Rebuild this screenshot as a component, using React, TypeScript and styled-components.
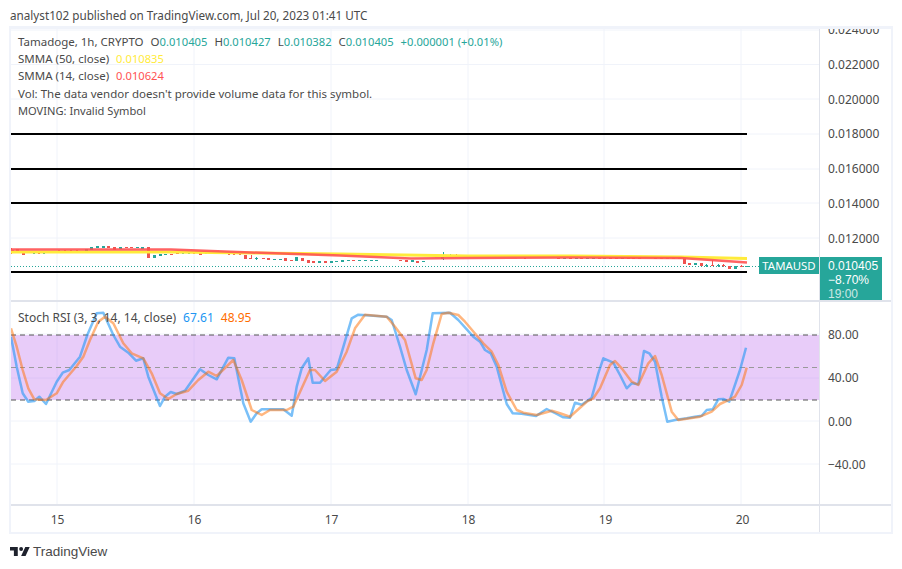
import styled, { createGlobalStyle } from 'styled-components'

const GREEN = '#26a69a'
const RED = '#ef5350'

type Candle = [number, number, number, number, string]

// x, top, width, height, colour
const candles: Candle[] = [
  [11, 248, 1, 6, RED], [11, 250, 3, 3, RED], [16, 249, 3, 3, RED], [22, 253, 3, 2, RED],
  [29, 252, 2, 1, GREEN], [33, 253, 2, 1, GREEN], [38, 253, 2, 1, RED], [43, 253, 2, 1, GREEN],
  [58, 250, 2, 1, RED], [64, 250, 2, 1, RED], [70, 250, 2, 1, RED], [76, 250, 2, 1, RED],
  [85, 249, 3, 2, GREEN], [90, 247, 3, 3, GREEN], [96, 246, 3, 2, GREEN], [102, 246, 3, 2, GREEN],
  [107, 246, 3, 2, RED], [113, 247, 3, 3, RED], [119, 247, 3, 2, GREEN], [125, 247, 3, 1, RED],
  [130, 247, 3, 1, RED], [136, 247, 3, 1, GREEN], [141, 247, 3, 2, GREEN], [147, 247, 3, 11, RED],
  [153, 255, 3, 3, GREEN], [159, 254, 3, 2, GREEN], [164, 254, 3, 1, GREEN], [170, 254, 3, 1, RED],
  [176, 253, 3, 1, RED], [182, 253, 2, 1, GREEN], [188, 253, 2, 1, GREEN], [193, 253, 2, 1, RED],
  [199, 253, 3, 2, RED], [205, 253, 2, 1, GREEN], [211, 253, 2, 1, GREEN], [216, 253, 2, 1, GREEN],
  [222, 253, 2, 1, RED], [228, 254, 2, 1, RED], [233, 254, 2, 1, RED], [239, 254, 2, 1, RED],
  [244, 255, 3, 4, RED], [251, 255, 1, 4, RED], [249, 258, 3, 1, RED], [255, 258, 3, 1, GREEN],
  [256, 257, 1, 3, GREEN], [262, 258, 3, 1, RED], [267, 258, 3, 2, RED], [273, 259, 3, 1, GREEN],
  [279, 259, 3, 1, GREEN], [284, 258, 3, 3, RED], [290, 260, 3, 1, RED], [295, 257, 3, 4, GREEN],
  [301, 258, 3, 3, RED], [307, 260, 3, 3, RED], [312, 261, 3, 2, RED], [318, 261, 3, 2, GREEN],
  [324, 261, 3, 2, RED], [330, 261, 3, 2, GREEN], [335, 261, 3, 1, GREEN], [341, 260, 3, 2, GREEN],
  [347, 260, 3, 1, GREEN], [352, 260, 3, 1, RED], [358, 260, 3, 1, GREEN], [364, 260, 3, 1, GREEN],
  [370, 260, 3, 1, GREEN], [375, 260, 3, 1, GREEN], [399, 260, 3, 1, RED], [405, 260, 3, 2, RED],
  [411, 260, 3, 2, GREEN], [416, 261, 3, 2, RED], [422, 261, 3, 1, GREEN], [443, 252, 1, 8, GREEN],
  [441, 257, 3, 2, GREEN], [450, 254, 1, 3, GREEN], [456, 254, 1, 3, RED], [524, 258, 2, 1, RED],
  [557, 258, 3, 1, RED], [563, 258, 3, 1, GREEN], [569, 258, 3, 1, RED], [575, 258, 3, 1, GREEN],
  [580, 258, 3, 1, RED], [586, 258, 3, 1, GREEN], [592, 258, 3, 1, GREEN], [598, 258, 3, 1, RED],
  [603, 258, 3, 1, GREEN], [609, 258, 3, 1, RED], [615, 258, 3, 1, RED], [621, 258, 3, 1, GREEN],
  [627, 258, 3, 1, RED], [632, 258, 3, 1, RED], [638, 258, 3, 1, RED], [654, 258, 3, 1, RED],
  [660, 258, 3, 1, RED], [666, 258, 3, 1, RED], [672, 258, 3, 1, RED], [678, 258, 3, 1, RED],
  [683, 258, 3, 6, RED], [688, 263, 3, 2, RED], [694, 263, 3, 2, GREEN], [700, 263, 3, 3, RED],
  [706, 264, 1, 3, GREEN], [705, 265, 3, 1, GREEN], [712, 260, 1, 6, RED], [711, 265, 3, 1, RED],
  [718, 264, 1, 3, GREEN], [717, 265, 3, 1, GREEN], [723, 264, 1, 3, RED], [722, 265, 3, 1, RED],
  [728, 266, 3, 3, RED], [734, 266, 3, 3, GREEN], [741, 265, 1, 2, RED], [740, 266, 3, 1, RED],
  [745, 266, 4, 1, GREEN],
]

const bluePoints = [
  [33, 110], [50, 200], [68, 280], [85, 305], [103, 303], [118, 290], [138, 312], [170, 245], [188, 218],
  [208, 210], [240, 170], [262, 105], [290, 40], [310, 38], [340, 105], [360, 140], [385, 158], [408, 182],
  [430, 175], [445, 230], [480, 318], [495, 290], [512, 276], [530, 282], [555, 272], [600, 208], [625, 225],
  [650, 238], [685, 173], [703, 175], [730, 310], [752, 365], [770, 340], [785, 328], [850, 328], [875, 347],
  [890, 260], [905, 205], [925, 175], [938, 248], [960, 248], [992, 210], [1010, 208], [1055, 55], [1075, 44],
  [1100, 46], [1160, 50], [1175, 60], [1200, 140],
]
const bluePoints2 = [
  [20, 210], [47, 283], [80, 150], [98, 40], [150, 38], [175, 60], [220, 110], [240, 125], [255, 150], [272, 160],
  [290, 200], [320, 312], [338, 340], [365, 341], [408, 348], [440, 327], [470, 342], [490, 352], [510, 353],
  [525, 308], [545, 314], [575, 293], [595, 220], [610, 175], [640, 188], [660, 225], [680, 265], [695, 250],
  [715, 253], [732, 153], [748, 160], [765, 185], [785, 290], [802, 365], [825, 360], [860, 355], [885, 350],
  [905, 347], [920, 330], [938, 328], [955, 298], [970, 297], [988, 305], [1020, 210], [1038, 143],
]
const orangePoints = [
  [33, 85], [50, 140], [68, 210], [85, 265], [103, 298], [138, 300], [170, 280], [190, 245], [230, 198],
  [250, 170], [270, 120], [295, 65], [315, 50], [340, 70], [370, 130], [395, 160], [430, 175], [455, 220],
  [480, 280], [505, 297], [530, 282], [565, 272], [595, 240], [625, 215], [650, 228], [700, 180], [725, 240],
  [755, 330], [785, 345], [810, 330], [860, 330], [880, 320], [905, 265], [930, 210], [945, 210], [975, 243],
  [1010, 215], [1040, 155], [1065, 85], [1095, 44], [1160, 50], [1185, 80],
]
const orangePoints2 = [
  [15, 120], [47, 235], [65, 240], [80, 210], [100, 130], [125, 42], [145, 38], [175, 45], [195, 65], [250, 130],
  [275, 155], [295, 195], [320, 275], [350, 330], [370, 338], [410, 345], [455, 332], [480, 340], [510, 350],
  [560, 305], [580, 295], [600, 265], [630, 195], [645, 183], [665, 205], [695, 245], [715, 255], [745, 190],
  [765, 168], [785, 225], [815, 335], [835, 360], [900, 350], [935, 335], [960, 312], [990, 298], [1005, 290],
  [1025, 255], [1040, 203],
]

// the points above were read from 3x crops starting at x=0 and x=400, y=300
const toLine = (first: number[][], second: number[][]) =>
  [
    ...first.map(([x, y]) => [x / 3, y / 3]),
    ...second.map(([x, y]) => [400 + x / 3, y / 3]),
  ]
    .map(([x, y]) => `${(x - 11).toFixed(1)},${(y - 2).toFixed(1)}`)
    .join(' ')

const timeLabels = ['15', '16', '17', '18', '19', '20']
const dayLines = [46, 183, 320, 457, 593, 730]

const GlobalStyle = createGlobalStyle`
  html, body {
    margin: 0;
    background: #fff;
  }
  body {
    font-family: "Noto Sans", "Liberation Sans", sans-serif;
  }
`

const Page = styled.div`
  width: 902px;
  height: 569px;
  display: flex;
  flex-direction: column;
  overflow: hidden;
  color: #4a4a4a;
`

const Published = styled.div`
  height: 26px;
  padding-left: 10px;
  font-size: 11.7px;
  line-height: 30px;
`

const Frame = styled.div`
  margin-left: 9px;
  width: 884px;
  height: 508px;
  box-sizing: border-box;
  border: 2px solid #f0f3fa;
  border-top-width: 3px;
  display: grid;
  grid-template-columns: 809px 71px;
  grid-template-rows: 273px 204px 26px;
`

const Pane = styled.div`
  position: relative;
  overflow: hidden;
  border-right: 1px solid #e0e3eb;
  border-bottom: 2px solid #e0e3eb;
`

const ChartSvg = styled.svg`
  display: block;
  width: 100%;
  height: 100%;
`

const Legend = styled.div`
  position: absolute;
  left: 7px;
  top: 4px;
  font-size: 11.5px;
  line-height: 17.2px;
  white-space: nowrap;
  color: #4a4a4a;
`

const LegendRow = styled.div`
  display: flex;
  gap: 7px;
`

const MovingRow = styled.div`
  font-size: 11.1px;
`

const Value = styled.span<{ $color: string }>`
  font-size: 11.2px;
  color: ${(p) => p.$color};
`

const Ohlc = styled.span`
  font-size: 11.2px;
  color: ${GREEN};
`

const RsiLegend = styled(Legend)`
  top: 7px;
  font-size: 12px;
  line-height: 17px;

  & ${Value} {
    font-size: 12px;
  }
`

const PriceAxis = styled.div`
  position: relative;
  overflow: hidden;
  border-bottom: 2px solid #e0e3eb;
`

const AxisLabels = styled.div<{ $offset: number; $step: number }>`
  display: flex;
  flex-direction: column;
  padding-left: 8px;
  margin-top: ${(p) => p.$offset}px;
  font-size: 12px;
  color: #4a4a4a;

  & > span {
    flex: none;
    height: ${(p) => p.$step}px;
    line-height: ${(p) => p.$step}px;
  }
`

const SymbolTag = styled.div`
  position: absolute;
  right: 0;
  top: 228px;
  width: 60px;
  height: 17px;
  background: ${GREEN};
  color: #fff;
  font-size: 11.4px;
  line-height: 17px;
  text-align: center;
`

const PriceTag = styled.div`
  position: absolute;
  left: 0;
  top: 228px;
  width: 62px;
  height: 44px;
  padding: 2px 0 0 8px;
  box-sizing: border-box;
  background: ${GREEN};
  color: #fff;
  font-family: "Liberation Sans", sans-serif;
  font-size: 12px;
  line-height: 14px;
`

const Countdown = styled.div`
  opacity: 0.75;
`

const TimeAxis = styled.div`
  display: flex;
  font-size: 12px;
  line-height: 27px;
  color: #4a4a4a;
  border-right: 1px solid #e0e3eb;
`

const TimeLabel = styled.span`
  flex: 0 0 137px;
  text-align: center;
  &:first-child {
    margin-left: -22px;
  }
`

const Brand = styled.div`
  display: flex;
  align-items: center;
  gap: 3px;
  margin: 7px 0 0 10px;
  height: 20px;
  font-family: "Liberation Sans", sans-serif;
  font-size: 13.5px;
  color: #4a4a4a;
`

const MainChart = () => (
  <ChartSvg viewBox="0 0 808 271">
    {[1, 35.5, 70, 105, 140, 174, 209].map((y) => (
      <line key={y} x1="0" x2="809" y1={y} y2={y} stroke="#f0f3fa" />
    ))}
    {dayLines.map((x) => (
      <line key={x} x1={x} x2={x} y1="0" y2="271" stroke="#f0f3fa" />
    ))}
    {[105, 140, 174, 243].map((y) => (
      <line key={y} x1="0" x2="736" y1={y} y2={y} stroke="#000" strokeWidth="2" />
    ))}
    <line x1="0" x2="809" y1="237.5" y2="237.5" stroke={GREEN} strokeWidth="1" strokeDasharray="1 2" />
    {candles.map(([x, y, w, h, color]) => (
      <rect key={`${x}-${y}-${w}`} x={x - 11} y={y - 29} width={w} height={h} fill={color} />
    ))}
    <polyline
      points="0,223 160,223 240,224 329,225 457,227 560,227 670,228 736,229.5"
      fill="none"
      stroke="#ffeb3b"
      strokeWidth="3"
      strokeLinejoin="round"
    />
    <polyline
      points="0,220.5 160,220.5 240,223.5 329,226.5 400,229.5 457,229 560,228.5 670,229 700,231 736,233.5"
      fill="none"
      stroke="#ff5252"
      strokeOpacity="0.9"
      strokeWidth="2.5"
      strokeLinejoin="round"
    />
  </ChartSvg>
)

const RsiChart = () => (
  <ChartSvg viewBox="0 0 808 202">
    {[32, 76, 119, 162].map((y) => (
      <line key={y} x1="0" x2="809" y1={y} y2={y} stroke="#f0f3fa" />
    ))}
    {dayLines.map((x) => (
      <line key={x} x1={x} x2={x} y1="0" y2="202" stroke="#f0f3fa" />
    ))}
    <rect x="0" y="33" width="809" height="65" fill="#9c27b0" fillOpacity="0.1" />
    <rect x="0" y="33" width="809" height="65" fill="#c98bff" fillOpacity="0.3" />
    <line x1="0" x2="809" y1="33" y2="33" stroke="#555" strokeDasharray="5 4" />
    <line x1="0" x2="809" y1="65.5" y2="65.5" stroke="#999" strokeDasharray="5 4" />
    <line x1="0" x2="809" y1="98" y2="98" stroke="#555" strokeDasharray="5 4" />
    <polyline
      points={toLine(bluePoints, bluePoints2)}
      fill="none"
      stroke="#2196f3"
      strokeOpacity="0.6"
      strokeWidth="2.5"
      strokeLinejoin="round"
    />
    <polyline
      points={toLine(orangePoints, orangePoints2)}
      fill="none"
      stroke="#ff6d00"
      strokeOpacity="0.5"
      strokeWidth="2.5"
      strokeLinejoin="round"
    />
  </ChartSvg>
)

const TradingViewLogo = () => (
  <svg width="20" height="9" viewBox="0 0 36 16">
    <path d="M14 16H7V6H0V0h14v16zM28 16h-8L27.5 0h8L28 16z" fill="#1e222d" />
    <circle cx="20" cy="3.5" r="3.5" fill="#1e222d" />
  </svg>
)

export default function App() {
  return (
    <Page>
      <GlobalStyle />
      <Published>analyst102 published on TradingView.com, Jul 20, 2023 01:41 UTC</Published>
      <Frame>
        <Pane>
          <MainChart />
          <Legend>
            <LegendRow>
              <span>Tamadoge, 1h, CRYPTO</span>
              <span>
                O<Ohlc>0.010405</Ohlc>
              </span>
              <span>
                H<Ohlc>0.010427</Ohlc>
              </span>
              <span>
                L<Ohlc>0.010382</Ohlc>
              </span>
              <span>
                C<Ohlc>0.010405</Ohlc>
              </span>
              <Ohlc>+0.000001 (+0.01%)</Ohlc>
            </LegendRow>
            <LegendRow>
              <span>SMMA (50, close)</span>
              <Value $color="#ffeb3b">0.010835</Value>
            </LegendRow>
            <LegendRow>
              <span>SMMA (14, close)</span>
              <Value $color="#ff5252">0.010624</Value>
            </LegendRow>
            <div>Vol: The data vendor doesn't provide volume data for this symbol.</div>
            <MovingRow>MOVING: Invalid Symbol</MovingRow>
          </Legend>
          <SymbolTag>TAMAUSD</SymbolTag>
        </Pane>
        <PriceAxis>
          <AxisLabels $offset={-16} $step={34.75}>
            <span>0.024000</span>
            <span>0.022000</span>
            <span>0.020000</span>
            <span>0.018000</span>
            <span>0.016000</span>
            <span>0.014000</span>
            <span>0.012000</span>
          </AxisLabels>
          <PriceTag>
            0.010405
            <div>−8.70%</div>
            <Countdown>19:00</Countdown>
          </PriceTag>
        </PriceAxis>
        <Pane>
          <RsiChart />
          <RsiLegend>
            <LegendRow>
              <span>Stoch RSI (3, 3, 14, 14, close)</span>
              <Value $color="#2196f3">67.61</Value>
              <Value $color="#ff6d00">48.95</Value>
            </LegendRow>
          </RsiLegend>
        </Pane>
        <PriceAxis>
          <AxisLabels $offset={11} $step={43.3}>
            <span>80.00</span>
            <span>40.00</span>
            <span>0.00</span>
            <span>−40.00</span>
          </AxisLabels>
        </PriceAxis>
        <TimeAxis>
          {timeLabels.map((label) => (
            <TimeLabel key={label}>{label}</TimeLabel>
          ))}
        </TimeAxis>
      </Frame>
      <Brand>
        <TradingViewLogo />
        <span>TradingView</span>
      </Brand>
    </Page>
  )
}
